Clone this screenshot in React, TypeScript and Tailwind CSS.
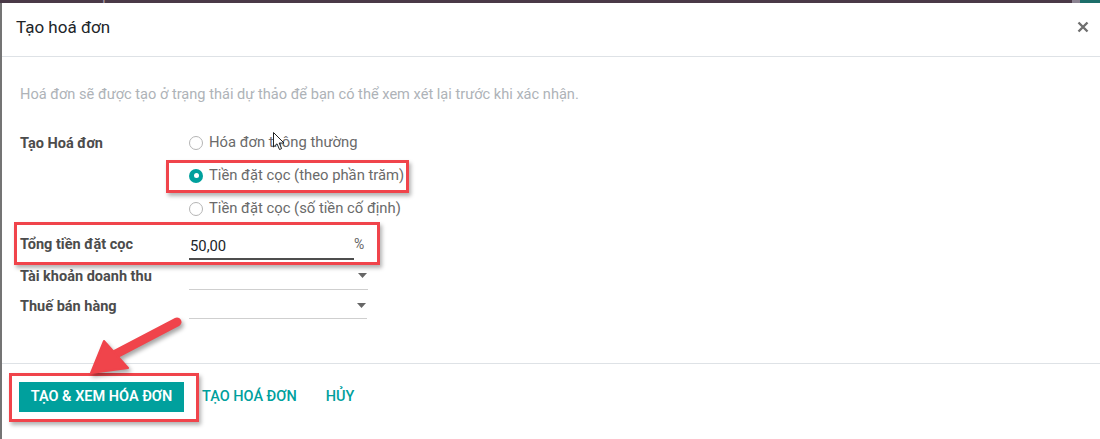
import React from "react";

const font = { fontFamily: "Roboto, 'Noto Sans', sans-serif" };

function Radio({ checked, label }: { checked?: boolean; label: string }) {
  return (
    <div className="flex h-[33px] items-center">
      {checked ? (
        <span className="flex h-[14px] w-[14px] items-center justify-center rounded-full bg-[#00a09d]">
          <span className="h-[5px] w-[5px] rounded-full bg-white" />
        </span>
      ) : (
        <span className="h-[14px] w-[14px] rounded-full border border-[#b5b5b5] bg-white" />
      )}
      <span className="ml-[6px] text-[14.8px] text-[#6a6a6a]">{label}</span>
    </div>
  );
}

function Caret() {
  return (
    <svg width="9" height="5" viewBox="0 0 9 5" className="mr-[1px]">
      <path d="M0 0h9L4.5 5z" fill="#666" />
    </svg>
  );
}

export default function App() {
  return (
    <div
      className="relative flex h-[439px] w-[1100px] flex-col overflow-hidden bg-white"
      style={font}
    >
      {/* backdrop strip above the dialog */}
      <div className="flex h-[3px] shrink-0 overflow-hidden bg-[#4a3947]">
        <div className="-mt-[13px] flex gap-[26px] text-[14px] leading-[16px] text-[#a89aa6]">
          <span className="-ml-[4px]">Hóa đơn</span>
          <span>Sản phẩm</span>
          <span>Báo cáo</span>
          <span>Cấu hình</span>
        </div>
        <div className="ml-auto flex">
          <span className="w-[8px] bg-[#8a8290]" />
          <span className="w-[20px] bg-[#1d6e6a]" />
        </div>
      </div>

      <div className="flex flex-1">
        <div className="w-[2px] bg-[#747474]" />
        <div className="flex flex-1 flex-col">
          {/* header */}
          <div className="flex h-[54px] items-center justify-between border-b border-[#dee2e6] pl-[14px] pr-[11px]">
            <h4 className="pb-[3px] text-[17px] text-[#212529]">Tạo hoá đơn</h4>
            <svg width="12" height="12" viewBox="0 0 12 12" className="mb-[6px]">
              <path d="M1.5 1.5l9 9M10.5 1.5l-9 9" stroke="#6f6f6f" strokeWidth="2.4" />
            </svg>
          </div>

          {/* body */}
          <div className="h-[306px] pl-[18px] pt-[27px]">
            <p className="text-[14.6px] leading-[20px] text-[#aeb3b8]">
              Hoá đơn sẽ được tạo ở trạng thái dự thảo để bạn có thể xem xét lại trước khi xác nhận.
            </p>

            <div className="mt-[22px] flex">
              <div className="w-[169px] pt-[8px] text-[14.5px] font-bold leading-[20px] text-[#4c4c4c]">
                Tạo Hoá đơn
              </div>
              <div className="flex flex-col">
                <Radio label="Hóa đơn thông thường" />
                <Radio checked label="Tiền đặt cọc (theo phần trăm)" />
                <Radio label="Tiền đặt cọc (số tiền cố định)" />
              </div>
            </div>

            <div className="flex h-[38px]">
              <div className="w-[169px] pt-[10px] text-[14.5px] font-bold leading-[20px] text-[#4c4c4c]">
                Tổng tiền đặt cọc
              </div>
              <div className="flex items-start">
                <div className="h-[35px] w-[165px] border-b-2 border-[#4d4d4d] pl-[1px] pt-[11px] text-[14.8px] leading-[20px] text-[#212529]">
                  50,00
                </div>
                <span className="pt-[9px] text-[14px] leading-[20px] text-[#666]">%</span>
              </div>
            </div>

            <div className="flex h-[28px]">
              <div className="w-[169px] pt-[4px] text-[14.5px] font-bold leading-[20px] text-[#4c4c4c]">
                Tài khoản doanh thu
              </div>
              <div className="flex h-[27px] w-[179px] items-start justify-end border-b border-[#cfcfcf] pt-[10px]">
                <Caret />
              </div>
            </div>

            <div className="flex h-[30px]">
              <div className="w-[169px] pt-[6px] text-[14.5px] font-bold leading-[20px] text-[#4c4c4c]">
                Thuế bán hàng
              </div>
              <div className="flex h-[28px] w-[178px] items-start justify-end border-b border-[#cfcfcf] pt-[12px]">
                <Caret />
              </div>
            </div>
          </div>

          {/* footer */}
          <div className="flex flex-1 items-start gap-[18px] border-t border-[#dee2e6] pl-[17px] pt-[18px]">
            <button className="h-[30px] w-[165px] bg-[#00a09d] text-[14.5px] font-semibold text-white">
              TẠO &amp; XEM HÓA ĐƠN
            </button>
            <button className="h-[30px] text-[14.5px] font-medium text-[#00a09d]">TẠO HOÁ ĐƠN</button>
            <button className="ml-[11px] h-[30px] text-[14.5px] font-medium text-[#00a09d]">HỦY</button>
          </div>
        </div>
      </div>

      {/* annotation boxes */}
      <div className="absolute left-[166px] top-[160px] h-[33px] w-[243px] border-[3px] border-[#f0444b] shadow-[2px_3px_4px_rgba(0,0,0,0.3)]" />
      <div className="absolute left-[14px] top-[222px] h-[43px] w-[366px] border-[3px] border-[#f0444b] shadow-[2px_3px_4px_rgba(0,0,0,0.3)]" />
      <div className="absolute left-[9px] top-[373px] h-[49px] w-[190px] border-[3px] border-[#f0444b] shadow-[2px_3px_4px_rgba(0,0,0,0.3)]" />

      {/* annotation arrow */}
      <svg
        className="absolute left-0 top-0"
        width="1100"
        height="439"
        style={{ filter: "drop-shadow(2px 3px 2px rgba(0,0,0,0.35))" }}
      >
        <line x1="177" y1="322" x2="112" y2="356" stroke="#f0444b" strokeWidth="9" strokeLinecap="round" />
        <path d="M91 373 L104 341 L128 368 Z" fill="#f0444b" stroke="#f0444b" strokeWidth="2" strokeLinejoin="round" />
      </svg>

      {/* mouse cursor */}
      <svg className="absolute left-[273px] top-[132px]" width="13" height="20" viewBox="0 0 13 20">
        <path
          d="M0.5 0.5 L0.5 15 L4 11.8 L6.5 17.5 L8.6 16.6 L6.2 11 L11 11 Z"
          fill="#fff"
          stroke="#222"
          strokeWidth="1"
          strokeLinejoin="round"
        />
      </svg>
    </div>
  );
}
